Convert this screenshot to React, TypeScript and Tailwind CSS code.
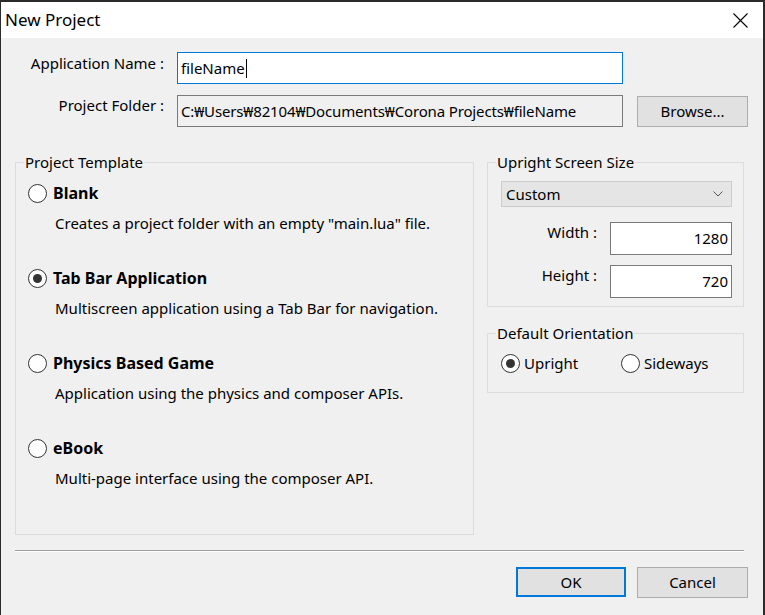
import React from 'react';

const font = { fontFamily: '"Noto Sans", "Open Sans", sans-serif' };

function Radio({ checked }: { checked?: boolean }) {
  return (
    <span className="flex h-[19px] w-[19px] shrink-0 items-center justify-center rounded-full border border-[#333333] bg-white">
      {checked && <span className="h-[9px] w-[9px] rounded-full bg-[#333333]" />}
    </span>
  );
}

function Template({ title, desc, checked }: { title: string; desc: string; checked?: boolean }) {
  return (
    <div className="h-[85px]">
      <div className="flex h-[20px] items-center gap-[6px]">
        <Radio checked={checked} />
        <span className="text-[16px] font-bold leading-[20px] text-black">{title}</span>
      </div>
      <div className="mt-[10px] pl-[27px] text-[15px] leading-[20px] text-black">{desc}</div>
    </div>
  );
}

function Group({ label, className, children }: { label: string; className?: string; children: React.ReactNode }) {
  return (
    <fieldset className={`border border-[#dcdcdc] px-[8px] ${className ?? ''}`}>
      <legend className="px-[1px] text-[15px] leading-[20px] text-black">{label}</legend>
      {children}
    </fieldset>
  );
}

export default function App() {
  return (
    <div className="h-[615px] w-[765px] bg-[#2b2b2b] pl-[1px] pr-[2px] pt-[2px]" style={font}>
      <div className="flex h-[613px] flex-col bg-[#f0f0f0]">
        {/* title bar */}
        <div className="flex h-[36px] shrink-0 items-center justify-between bg-white pl-[4px] pr-[15px]">
          <span className="text-[17px] text-black">New Project</span>
          <svg width="15" height="15" viewBox="0 0 15 15" className="text-black">
            <path d="M0.5 0.5 L14.5 14.5 M14.5 0.5 L0.5 14.5" stroke="currentColor" strokeWidth="1.1" />
          </svg>
        </div>

        <div className="flex flex-col px-[14px]">
          {/* name / folder rows */}
          <div className="mt-[14px] flex items-start">
            <div className="mt-[1px] w-[162px] pr-[13px] text-right text-[15px] leading-[20px] text-black">Application Name :</div>
            <div className="flex h-[32px] w-[446px] items-center border border-[#0078d7] bg-white pl-[3px] text-[15px] text-black">
              fileName<span className="ml-[1px] h-[19px] w-[1px] bg-black" />
            </div>
          </div>
          <div className="mt-[11px] flex items-start">
            <div className="mt-[0px] w-[162px] pr-[13px] text-right text-[15px] leading-[20px] text-black">Project Folder :</div>
            <div className="flex h-[32px] w-[446px] items-center border border-[#7a7a7a] bg-[#f0f0f0] pl-[3px] text-[15px] tracking-[-0.15px] text-black">
              C:₩Users₩82104₩Documents₩Corona Projects₩fileName
            </div>
            <button className="ml-[14px] mt-[1px] h-[31px] w-[111px] border border-[#adadad] bg-[#e1e1e1] text-[15px] text-black">
              Browse...
            </button>
          </div>

          {/* groups */}
          <div className="mt-[25px] flex gap-[13px]">
            <Group label="Project Template" className="h-[383px] w-[459px]">
              <div className="pl-[4px] pt-[11px]">
                <Template title="Blank" desc={'Creates a project folder with an empty "main.lua" file.'} />
                <Template title="Tab Bar Application" desc="Multiscreen application using a Tab Bar for navigation." checked />
                <Template title="Physics Based Game" desc="Application using the physics and composer APIs." />
                <Template title="eBook" desc="Multi-page interface using the composer API." />
              </div>
            </Group>

            <div className="flex w-[257px] flex-col">
              <Group label="Upright Screen Size" className="h-[155px]">
                <div className="pl-[5px] pr-[3px] pt-[9px]">
                  <div className="flex h-[26px] items-center justify-between border border-[#cccccc] bg-[#e5e5e5] pl-[4px] pr-[8px] text-[15px] text-black">
                    <span>Custom</span>
                    <svg width="10" height="6" viewBox="0 0 10 6">
                      <path d="M0.5 0.5 L5 5 L9.5 0.5" fill="none" stroke="#555555" strokeWidth="1" />
                    </svg>
                  </div>
                  <div className="mt-[15px] flex items-start justify-end">
                    <span className="mr-[13px] text-[15px] leading-[20px] text-black">Width :</span>
                    <div className="flex h-[33px] w-[122px] items-center justify-end border border-[#7a7a7a] bg-white pr-[3px] text-[15px] text-black">
                      1280
                    </div>
                  </div>
                  <div className="mt-[10px] flex items-start justify-end">
                    <span className="mr-[13px] text-[15px] leading-[20px] text-black">Height :</span>
                    <div className="flex h-[33px] w-[122px] items-center justify-end border border-[#7a7a7a] bg-white pr-[3px] text-[15px] text-black">
                      720
                    </div>
                  </div>
                </div>
              </Group>

              <Group label="Default Orientation" className="mt-[16px] h-[70px]">
                <div className="flex items-center pl-[5px] pt-[9px] text-[15px] text-black">
                  <Radio checked />
                  <span className="ml-[4px] w-[97px]">Upright</span>
                  <Radio />
                  <span className="ml-[4px]">Sideways</span>
                </div>
              </Group>
            </div>
          </div>

          {/* separator */}
          <div className="mt-[15px] h-[2px] w-[729px] border-t border-[#a0a0a0] border-b border-b-white" />

          {/* buttons */}
          <div className="mt-[15px] flex justify-end gap-[11px] pr-[1px]">
            <button className="h-[30px] w-[110px] border-2 border-[#0078d7] bg-[#e1e1e1] text-[15px] text-black">OK</button>
            <button className="h-[31px] w-[111px] border border-[#adadad] bg-[#e1e1e1] text-[15px] text-black">Cancel</button>
          </div>
        </div>
      </div>
    </div>
  );
}
